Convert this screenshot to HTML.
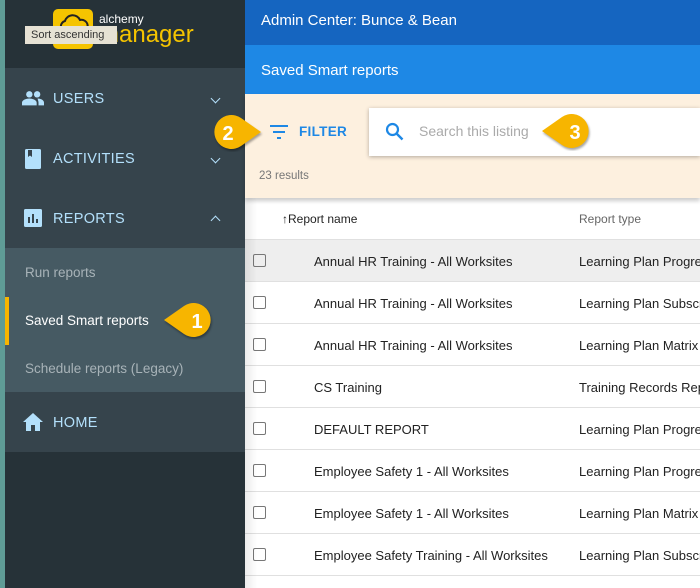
<!DOCTYPE html>
<html><head><style>
*{margin:0;padding:0;box-sizing:border-box}
body{width:700px;height:588px;overflow:hidden;position:relative;font-family:"Liberation Sans",Roboto,sans-serif;background:#fff}
.abs{position:absolute}
.nav{color:#b3e0fb;font-size:14.5px;letter-spacing:.3px}
.chev{position:absolute;left:212px;width:7px;height:7px;border-right:1.8px solid #b3e0fb;border-bottom:1.8px solid #b3e0fb}
.row{position:absolute;left:245px;width:455px;height:42px;border-bottom:1px solid #e0e0e0;font-size:13px;color:#222;overflow:hidden}
.row .cb{position:absolute;left:8px;top:14px;width:13px;height:13px;border:1.5px solid #777;border-radius:2px}
.row .n{position:absolute;left:69px;top:14px}
.row .t{position:absolute;left:334px;top:14px;white-space:nowrap}
</style></head><body>
<div class="abs" style="left:0;top:0;width:5px;height:588px;background:#5f9c96"></div>
<div class="abs" style="left:5px;top:0;width:240px;height:588px;background:#263238"></div>
<div class="abs" style="left:5px;top:68px;width:240px;height:180px;background:#36444c"></div>
<div class="abs" style="left:5px;top:248px;width:240px;height:144px;background:#465a63"></div>
<div class="abs" style="left:5px;top:392px;width:240px;height:60px;background:#36444c"></div>
<!-- logo -->
<div class="abs" style="left:53px;top:9px;width:40px;height:40px;background:#f5c400;border-radius:5px"></div>
<svg class="abs" style="left:56px;top:12px" width="34" height="28" viewBox="0 0 34 28"><path d="M8 20a6 6 0 0 1 1-11 8 8 0 0 1 15-1 6 6 0 0 1 3 12z" fill="none" stroke="#222" stroke-width="2"/></svg>
<div class="abs" style="left:99px;top:12px;color:#fff;font-size:12px">alchemy</div>
<div class="abs" style="left:99px;top:21px;color:#f5c400;font-size:24px;font-weight:normal">manager</div>
<div class="abs" style="left:25px;top:26px;width:92px;height:18px;background:#e6e2d4;color:#333;font-size:11px;line-height:18px;padding-left:6px">Sort ascending</div>
<!-- nav -->
<svg class="abs" style="left:22px;top:90px" width="22" height="16" viewBox="0 0 24 16"><circle cx="8" cy="4" r="3.5" fill="#b3e0fb"/><circle cx="16.5" cy="4" r="3.5" fill="#b3e0fb"/><path d="M0 16v-3c0-3 5-4.5 8-4.5s8 1.5 8 4.5v3zM17 8.5c3 0 7 1.5 7 4.5v3h-6v-3c0-2-1-3.5-1-4.5z" fill="#b3e0fb"/></svg>
<div class="abs nav" style="left:53px;top:91px">USERS</div>
<div class="chev" style="top:95px;transform:rotate(45deg)"></div>
<svg class="abs" style="left:25px;top:149px" width="16" height="20" viewBox="0 0 16 20"><rect width="16" height="20" rx="1.5" fill="#b3e0fb"/><path d="M3 1h4v7l-2-1.5L3 8z" fill="#36444c"/></svg>
<div class="abs nav" style="left:53px;top:151px">ACTIVITIES</div>
<div class="chev" style="top:155px;transform:rotate(45deg)"></div>
<svg class="abs" style="left:24px;top:209px" width="18" height="18" viewBox="0 0 18 18"><rect width="18" height="18" rx="1.5" fill="#b3e0fb"/><path d="M4 8h2v6H4zM8 5h2v9H8zM12 10h2v4h-2z" fill="#36444c"/></svg>
<div class="abs nav" style="left:53px;top:211px">REPORTS</div>
<div class="chev" style="top:217px;transform:rotate(-135deg)"></div>
<div class="abs" style="left:25px;top:265px;color:#a8b3b8;font-size:13.5px">Run reports</div>
<div class="abs" style="left:5px;top:297px;width:4px;height:48px;background:#f7b500"></div>
<div class="abs" style="left:25px;top:313px;color:#fff;font-size:13.5px">Saved Smart reports</div>
<div class="abs" style="left:25px;top:361px;color:#a8b3b8;font-size:13.5px">Schedule reports (Legacy)</div>
<svg class="abs" style="left:23px;top:413px" width="20" height="18" viewBox="0 0 20 18"><path d="M10 0L0 9h3v9h5v-6h4v6h5V9h3z" fill="#b3e0fb"/></svg>
<div class="abs nav" style="left:53px;top:415px">HOME</div>
<!-- header -->
<div class="abs" style="left:245px;top:0;width:455px;height:45px;background:#1565c0"></div>
<div class="abs" style="left:261px;top:12px;color:#fff;font-size:15px">Admin Center: Bunce &amp; Bean</div>
<div class="abs" style="left:245px;top:45px;width:455px;height:49px;background:#1e88e5"></div>
<div class="abs" style="left:261px;top:62px;color:#fff;font-size:15px">Saved Smart reports</div>
<div class="abs" style="left:245px;top:94px;width:455px;height:104px;background:#fdf0df;box-shadow:0 3px 4px rgba(0,0,0,.2)"></div>
<svg class="abs" style="left:270px;top:125px" width="18" height="14" viewBox="0 0 18 14"><path d="M0 1h18M3 7h12M7 13h4" stroke="#1e88e5" stroke-width="2"/></svg>
<div class="abs" style="left:299px;top:124px;color:#1e88e5;font-size:13.5px;font-weight:bold;letter-spacing:.3px">FILTER</div>
<div class="abs" style="left:369px;top:108px;width:331px;height:48px;background:#fff;box-shadow:0 1px 4px rgba(0,0,0,.3)"></div>
<svg class="abs" style="left:385px;top:122px" width="19" height="19" viewBox="0 0 19 19"><circle cx="7.5" cy="7.5" r="5.5" fill="none" stroke="#1e88e5" stroke-width="2.2"/><path d="M11.5 11.5l6 6" stroke="#1e88e5" stroke-width="2.4"/></svg>
<div class="abs" style="left:419px;top:123px;color:#aaa;font-size:14px">Search this listing</div>
<div class="abs" style="left:259px;top:170px;color:#777;font-size:11.5px">23 results</div>
<!-- table header -->
<div class="abs" style="left:282px;top:212px;color:#222;font-size:12px">↑Report name</div>
<div class="abs" style="left:579px;top:212px;color:#666;font-size:12px">Report type</div>
<div class="abs" style="left:245px;top:239px;width:455px;height:1px;background:#e0e0e0"></div>
<div class="row" style="top:240px;background:#eee"><div class="cb"></div><div class="n">Annual HR Training - All Worksites</div><div class="t">Learning Plan Progress</div></div>
<div class="row" style="top:282px"><div class="cb"></div><div class="n">Annual HR Training - All Worksites</div><div class="t">Learning Plan Subscriptions</div></div>
<div class="row" style="top:324px"><div class="cb"></div><div class="n">Annual HR Training - All Worksites</div><div class="t">Learning Plan Matrix</div></div>
<div class="row" style="top:366px"><div class="cb"></div><div class="n">CS Training</div><div class="t">Training Records Report</div></div>
<div class="row" style="top:408px"><div class="cb"></div><div class="n">DEFAULT REPORT</div><div class="t">Learning Plan Progress</div></div>
<div class="row" style="top:450px"><div class="cb"></div><div class="n">Employee Safety 1 - All Worksites</div><div class="t">Learning Plan Progress</div></div>
<div class="row" style="top:492px"><div class="cb"></div><div class="n">Employee Safety 1 - All Worksites</div><div class="t">Learning Plan Matrix</div></div>
<div class="row" style="top:534px"><div class="cb"></div><div class="n">Employee Safety Training - All Worksites</div><div class="t">Learning Plan Subscriptions</div></div>
<div class="abs" style="left:245px;top:198px;width:12px;height:390px;background:linear-gradient(90deg,rgba(0,0,0,.08),rgba(0,0,0,0))"></div>
<!-- pins -->
<svg class="abs" style="left:160px;top:300px" width="60" height="40" viewBox="0 0 60 40"><path d="M4 20L24 6A17 17 0 1 1 24 34z" fill="#f7b500" filter="drop-shadow(1px 2px 1px rgba(0,0,0,.35))"/><text x="37" y="28" fill="#fff" font-family="Liberation Sans" font-weight="bold" font-size="20" text-anchor="middle">1</text></svg>
<svg class="abs" style="left:205px;top:112px" width="60" height="40" viewBox="0 0 60 40"><path d="M56 20L36 6A17 17 0 1 0 36 34z" fill="#f7b500" filter="drop-shadow(1px 2px 1px rgba(0,0,0,.35))"/><text x="23" y="28" fill="#fff" font-family="Liberation Sans" font-weight="bold" font-size="20" text-anchor="middle">2</text></svg>
<svg class="abs" style="left:538px;top:111px" width="62" height="40" viewBox="0 0 62 40"><path d="M4 20L24 6A17 17 0 1 1 24 34z" fill="#f7b500" filter="drop-shadow(1px 2px 1px rgba(0,0,0,.35))"/><text x="37" y="28" fill="#fff" font-family="Liberation Sans" font-weight="bold" font-size="20" text-anchor="middle">3</text></svg>
</body></html>
